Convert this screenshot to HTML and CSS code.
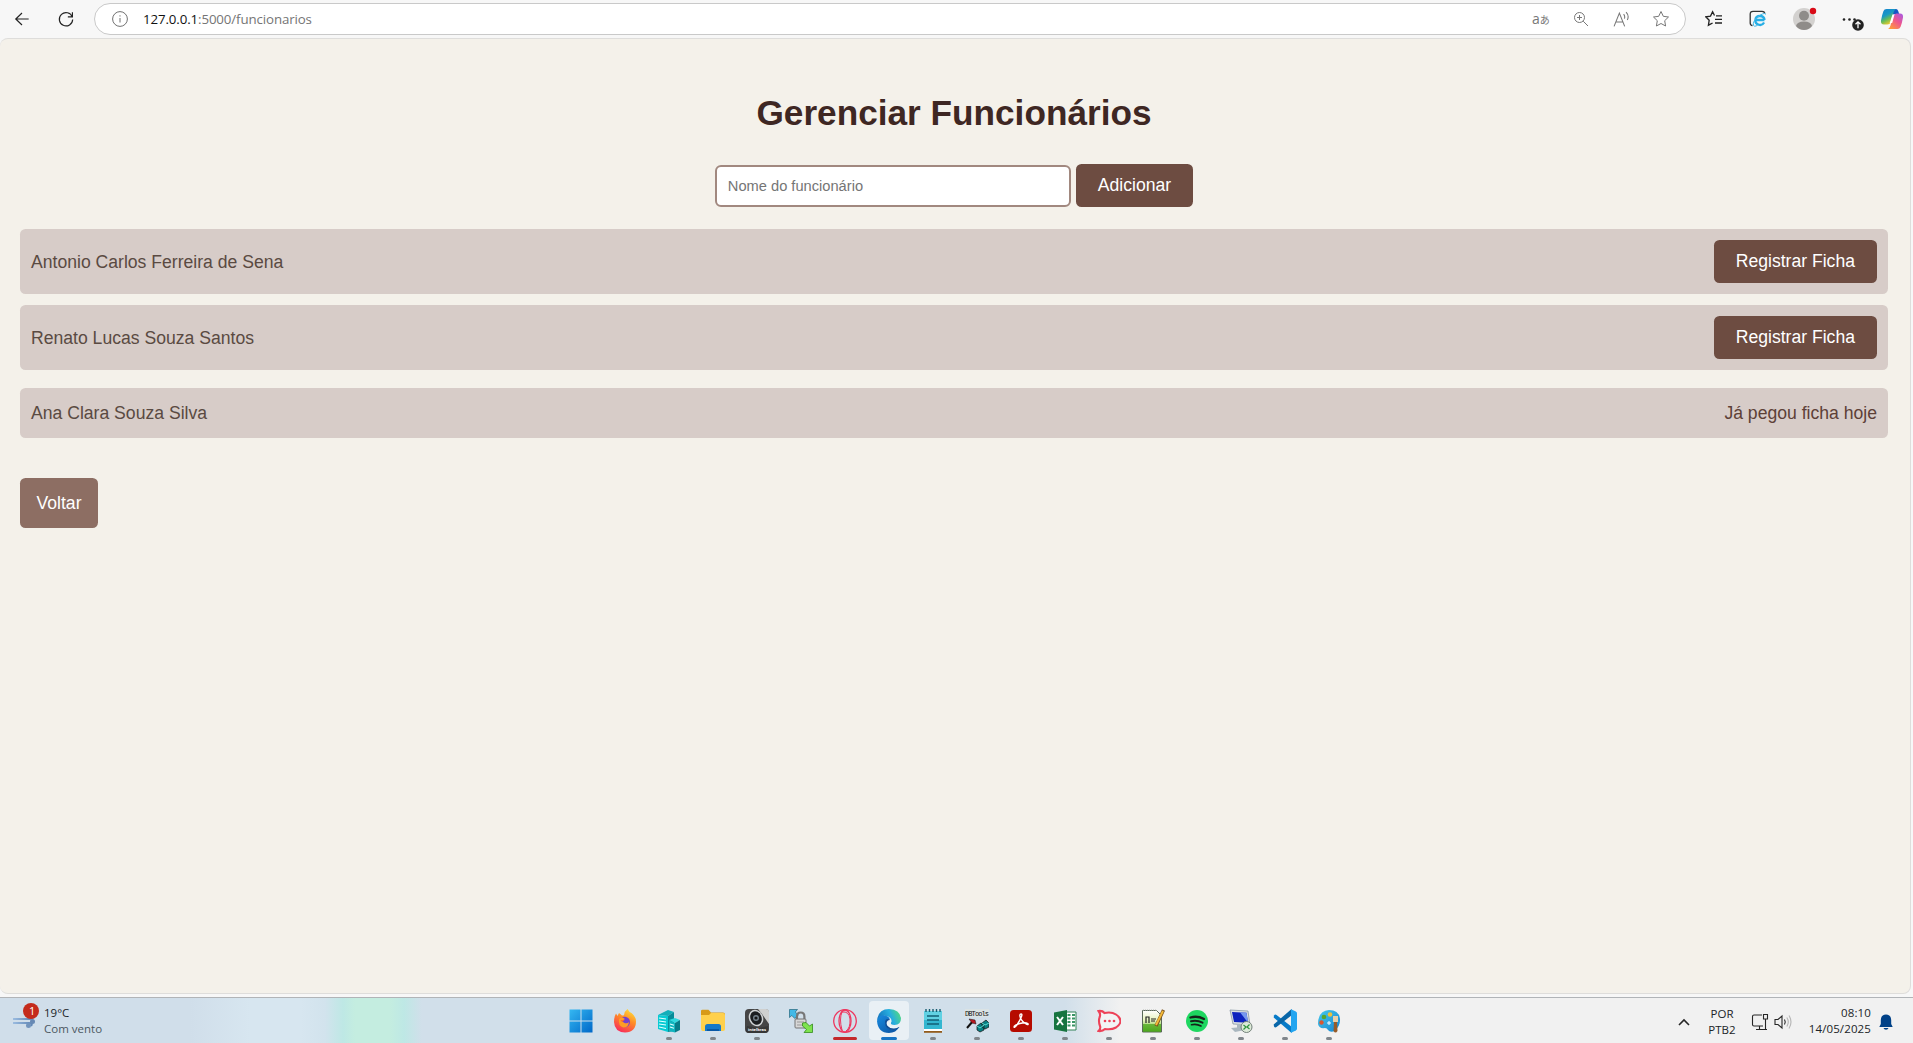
FILE: index.html
```html
<!DOCTYPE html>
<html lang="pt-BR">
<head>
<meta charset="utf-8">
<title>Gerenciar Funcionários</title>
<link rel="stylesheet" href="styles.css">
</head>
<body>
<header class="toolbar">
  <svg class="nav-icon back" viewBox="0 0 24 24"><path d="M20 12H4.5M12 4.8L4.5 12l7.500 7.200"/></svg>
  <svg class="nav-icon reload" viewBox="0 0 24 24"><path d="M19.500 9.500A8 8 0 1 0 20 12.500M19.700 4v5.500h-5.500"/></svg>
  <div class="address">
    <svg class="info" viewBox="0 0 16 16"><circle cx="8" cy="8" r="7.400"/><path d="M8 7v4.500M8 4.300v1.200"/></svg>
    <span class="url"><b>127.0.0.1</b>:5000/funcionarios</span>
    <span class="translate">a<small>あ</small></span>
    <svg class="ico zoom" viewBox="0 0 16 16"><circle cx="6.500" cy="6.500" r="5"/><path d="M10.200 10.200L15 15M6.500 4v5M4 6.500h5"/></svg>
    <svg class="ico read" viewBox="0 0 16 16"><path d="M1 14.500L6 2l5 12.500M2.700 10.300h6.700M10 3q1.600 1.800.7 4.200M12.300 1q3.200 3.300 1.200 7.500"/></svg>
    <svg class="ico star" viewBox="0 0 18 18"><path d="M9 1.500l2.300 4.800 5.200.7-3.800 3.700.9 5.300L9 13.500 4.400 16l.9-5.300L1.500 7l5.200-.7z"/></svg>
  </div>
  <svg class="tool fav" viewBox="0 0 18 18"><path d="M9.500 5.500L7.600 1.700 5.500 6.100l-4.700.7 3.400 3.400-.8 5 4.200-2.200M11 5.800h6M10 9.400h7M10 13h7" /></svg>
  <svg class="tool ie" viewBox="0 0 18 18"><path d="M3.500 15.500Q1.200 15.500 1.200 13V4Q1.200 1.300 4 1.300h9Q15.700 1.300 15.700 3.500"/><path class="e-mark" d="M15.500 10H6.500M6.300 10a4.700 4.700 0 0 1 9.300 0M6.300 10a4.700 4.700 0 0 0 8.800 2.500"/><path class="e-ring" d="M16.500 4.500Q17 2 11 5.200 3 11 4.500 15.500 5 17 8.500 15.500"/></svg>
  <svg class="tool profile" viewBox="0 0 26 26"><circle cx="12" cy="14" r="11" fill="#d3d1cf"/><circle cx="12" cy="10.800" r="5" fill="#8f8c89"/><path d="M4 21q1-4.500 8-4.500t8 4.500q-3.200 4-8 4t-8-4" fill="#8f8c89"/><circle cx="21" cy="6" r="3.200" fill="#d90b17"/></svg>
  <svg class="tool more" viewBox="0 0 24 18"><g fill="#222"><circle cx="3" cy="6.500" r="1.300"/><circle cx="8.500" cy="6.500" r="1.300"/><circle cx="13.500" cy="6.500" r="1.300"/><circle cx="17" cy="12" r="5.800"/></g><path d="M17 15.300V9M14.500 11.200L17 8.800l2.500 2.400" fill="none" stroke="#fff" stroke-width="1.300"/></svg>
  <svg class="tool copilot" viewBox="0 0 24 24">
    <defs><linearGradient id="cpA" x2=".5" y2="1"><stop stop-color="#1582cf"/><stop offset=".45" stop-color="#1999c5"/><stop offset=".7" stop-color="#68bd57"/><stop offset="1" stop-color="#f2c92c"/></linearGradient><linearGradient id="cpB" x1="1" x2=".2" y2="1"><stop stop-color="#a45be8"/><stop offset=".5" stop-color="#ef568e"/><stop offset="1" stop-color="#ff9b39"/></linearGradient></defs>
    <path fill="#1657c5" d="M13 2h3q1.600 0 2.200 2l1 3h-4q-2 0-2.700 2z"/>
    <path fill="url(#cpA)" d="M6.500 2H16q-1.800 1-2.500 3.500l-2.700 9.200Q10 17.500 7.500 17.500H4Q.5 17.500 1 13.500 2 7.800 3.400 4.200 4.200 2 6.500 2z"/>
    <path fill="url(#cpB)" d="M17.500 22H8q1.800-1 2.500-3.500l2.700-9.200Q14 6.500 16.500 6.500H20q3.500 0 3 4-1 5.700-2.400 9.300-.8 2.200-3.100 2.200z"/>
    <path fill="#fff" d="M12.500 7.500h2L12.200 16h-2.500z"/>
  </svg>
</header>

<main class="page">
  <h1>Gerenciar Funcionários</h1>
  <form class="add-form">
    <input class="name-input" type="text" placeholder="Nome do funcionário">
    <button class="button" type="button">Adicionar</button>
  </form>
  <ul class="staff">
    <li class="staff-row"><span class="name">Antonio Carlos Ferreira de Sena</span><button class="button" type="button">Registrar Ficha</button></li>
    <li class="staff-row"><span class="name">Renato Lucas Souza Santos</span><button class="button" type="button">Registrar Ficha</button></li>
  </ul>
  <ul class="staff done">
    <li class="staff-row"><span class="name">Ana Clara Souza Silva</span><span>Já pegou ficha hoje</span></li>
  </ul>
  <a class="back-link">Voltar</a>
</main>

<footer class="taskbar">
  <div class="weather">
    <svg viewBox="0 0 28 28"><defs><linearGradient id="wind"><stop stop-color="#9bbce0"/><stop offset="1" stop-color="#5c83b4"/></linearGradient></defs><path d="M1 16h17q4-1 3-4M1 20h16q4 0 2 3" fill="none" stroke="url(#wind)" stroke-width="2.200"/><circle cx="16.500" cy="22.500" r="2.500" fill="#7294bd"/><circle cx="20.500" cy="18.500" r="2.500" fill="#6789b4"/><circle cx="19" cy="8" r="8" fill="#c42b1c"/></svg>
    <span class="count">1</span>
    <div class="forecast"><span>19°C</span><span class="muted">Com vento</span></div>
  </div>

  <nav class="apps">
    <div class="app"><svg viewBox="0 0 24 24"><defs><linearGradient id="win" x2="1" y2="1"><stop stop-color="#35b8f2"/><stop offset="1" stop-color="#0068c8"/></linearGradient></defs><path fill="url(#win)" d="M.5.500h11v11H.5zM12.500.500h11v11h-11zM.5 12.500h11v11H.5zM12.500 12.500h11v11h-11z"/></svg></div>
    <div class="app"><svg viewBox="0 0 24 24"><defs><linearGradient id="ff" x1=".8" x2=".3" y2="1"><stop stop-color="#ffe43b"/><stop offset=".45" stop-color="#ff8b27"/><stop offset="1" stop-color="#f82b5b"/></linearGradient></defs><path fill="url(#ff)" d="M14.500 0q1.500 3 4 4 4.500 3.500 4.500 8.500Q23 23 12 23.500 1.500 23 1 13 1 8 3 4.500L4.500 7 6 4l3 2.500 2-.2Q11.500 2 14.500 0z"/><circle cx="11.800" cy="13" r="5.200" fill="#7441cf"/><path fill="#ff9c24" d="M6 10q3-3 6 0l-3.500 2 3 2q3 1 4.500-1-.5 5.500-5.500 5.500Q5 17.500 6 10z"/><path fill="#ff6a29" d="M7.500 11h4L9 13z"/></svg></div>
    <div class="app run"><svg viewBox="0 0 24 24"><path fill="#13aeb9" d="M1 6L11 1l6 2-6 4z"/><path fill="#07cbd4" d="M1 6l10 1v16l-10-3z"/><path fill="#078c99" d="M11 7l6-4v19l-6 1z"/><path fill="#31d9df" d="M12 11l6-2 5 2-5 3z"/><path fill="#10b5bf" d="M12 11l6 3v9.500L12 22z"/><path fill="#087c89" d="M18 14l5-3v10l-5 2.500z"/><path stroke="#e4ffff" stroke-width="1.200" d="M2 9l7 1M2 12l7 1M2 15l7 1M2 18l7 1.500M13 15l4 1.200M13 18l4 1.200"/></svg></div>
    <div class="app run"><svg viewBox="0 0 24 24"><path fill="#d89a18" d="M0 2Q0 .7 1.500.7h6L10 3.500h12q2 0 2 2V9H0z"/><path fill="#ffd04c" d="M0 6h8l2-2h12q2 0 2 2v14q0 2-2 2H2q-2 0-2-2z"/><path fill="#1678c9" d="M4 22v-4.500Q4 15 6.500 15h11Q20 15 20 17.500V22z"/><path fill="#0758a6" d="M6 20h12v2H6z"/></svg></div>
    <div class="app run"><svg viewBox="0 0 24 24"><rect width="24" height="24" rx="4" fill="#454545"/><path fill="#cfd0cf" d="M13 0h8q3 0 3 3v12L17 5z"/><ellipse cx="11" cy="9" rx="7" ry="8.500" fill="#d1d4d5" transform="rotate(-25 11 9)"/><ellipse cx="11" cy="9" rx="5.500" ry="7" fill="#1c1e20" transform="rotate(-25 11 9)"/><circle cx="11" cy="9" r="3" fill="#74818a"/><circle cx="11" cy="9" r="1.600" fill="#161616"/><path d="M2 17l12 2 9-2v4q0 3-3 3H4q-3 0-3-3z" fill="#373737"/><text x="12" y="22" font-size="4" text-anchor="middle" fill="#fff" font-weight="bold">intelbras</text></svg></div>
    <div class="app"><svg viewBox="0 0 24 24"><path fill="#42b9e7" stroke="#24657c" stroke-width=".7" d="M.5.500h8L6.300 3l3 3-3.500 3.500-3-3L.5 8.500z"/><path d="M8 11V7.500q0-4 3.700-4t3.700 4V11" fill="none" stroke="#777" stroke-width="2.200"/><rect x="6" y="10" width="11" height="9" rx="1" fill="#d7d7d7" stroke="#747474"/><path d="M8 13h7M8 16h7" stroke="#999"/><path fill="#7ee34e" stroke="#348b1d" stroke-width=".8" d="M13.500 14l3.500-.5 3.500 3.500 3-2v8.500H15l2.500-3-4-3.500z"/></svg></div>
    <div class="app run opera"><svg viewBox="0 0 24 24"><g fill="none" stroke="#ee365e"><circle cx="12" cy="12" r="11.300" stroke-width="1.300"/><ellipse cx="12" cy="12" rx="6" ry="11" stroke-width="1.300"/><path d="M9 3q7-1 8 7 .5 9-4 12M9 3q-3 7 0 18" stroke-width="1"/></g></svg></div>
    <div class="app run active"><svg viewBox="0 0 24 24"><defs><linearGradient id="edgeT" y1=".3" x2="1"><stop stop-color="#1679be"/><stop offset=".5" stop-color="#27aee0"/><stop offset="1" stop-color="#5be36b"/></linearGradient><linearGradient id="edgeB" x2="1" y2="1"><stop stop-color="#198ce0"/><stop offset="1" stop-color="#0a4e9d"/></linearGradient></defs><path fill="url(#edgeT)" d="M0 12Q1 0 12 0q11 .5 12 9.500 0 6-6.500 6.500-5 0-3-3.300Q15 8 9 7 3 6 0 12z"/><path fill="url(#edgeB)" d="M0 12Q1 5.500 8 6.500q4.500 1 5 4-4 .5-4 5 1.500 6 9 4.500 3-1.200 4.500-2.200Q19 24 12 24 1 24 0 12z"/><path fill="#124e96" d="M8 13q0 8 8.500 8 3.500-.5 6-3-8 3.700-12-1.500Q9 13.500 13 10.500 8.500 9 8 13z"/><path fill="#edf5f9" d="M12.800 10.400q-2.700 2-.5 5 3.500 3.500 8.700 2.500-7.500 3-11-2-1.500-4 2.800-5.500z"/></svg></div>
    <div class="app run"><svg viewBox="0 0 24 24"><path fill="#33b6d0" d="M3 2h18v19H3z"/><path fill="#60d1e3" d="M3 2h18v9H3z"/><path stroke="#175d71" stroke-width="1.400" d="M5 0v3M8.500 0v3M12 0v3M15.500 0v3M19 0v3"/><path stroke="#125f76" stroke-width="1.300" d="M6 7h12M6 11h12M6 15h12"/><path fill="#fff" d="M3 20h18v2H3z"/><path fill="#925c1d" d="M3 22h18v1.800H3z"/></svg></div>
    <div class="app run"><svg viewBox="0 0 24 24"><path fill="#dbe3e4" d="M0 0h24v8H0z"/><text class="dbtools" x="12" y="7" text-anchor="middle" textLength="24" fill="#111">DBTools</text><path d="M2 19l6-7" stroke="#111" stroke-width="2"/><path d="M4 10l6 1 1 4-4-1z" fill="#b91920" stroke="#111" stroke-width=".5"/><path fill="#087f83" stroke="#111" stroke-width=".7" d="M12 17l4-3 3 2v5l-4 2-3-2zM17 14l4-3 3 3v4l-4 2-3-2z"/><path d="M12 17l3 2 4-3M17 14l3 2 4-2" fill="none" stroke="#5adbd1"/></svg></div>
    <div class="app run"><svg viewBox="0 0 24 24"><rect x="1" y="1" width="22" height="22" rx="3.500" fill="#b60b00"/><path d="M12 5q-2 0-.5 4 1.500 4 6.300 6.300 2 .7 1-.8-2.500-1.600-8 0-5.500 1.700-5.800 3.500.3 1 2.500-1.500 3.500-4.800 5-9Q13.500 5 12 5z" fill="none" stroke="#fff" stroke-width="1.400"/></svg></div>
    <div class="app run"><svg viewBox="0 0 24 24"><path fill="#fff" stroke="#328257" d="M11 3h12v18H11z"/><path fill="#3a9565" d="M14.500 5h3v2h-3zm4.500 0h3v2h-3zm-4.500 3.500h3v2h-3zm4.500 0h3v2h-3zM14.500 12h3v2h-3zm4.500 0h3v2h-3zM14.500 15.500h3v2h-3zm4.500 0h3v2h-3z"/><path fill="#17743f" d="M1 3.500L14 1v22L1 20.500z"/><path stroke="#fff" stroke-width="2" d="M4 8l6 8M10 8l-6 8"/></svg></div>
    <div class="app run"><svg viewBox="0 0 24 24"><path d="M1.500 2q4-.5 6 2 7-1.500 11.500 1.500 4.500 3 4.500 6.500T19 18.500Q14.500 21 8 20q-2.500 2.500-6.500 2Q4 19.500 3 17q-2-5 0-10Q3.500 4.500 1.500 2z" fill="#f2f4f5" stroke="#ed4258" stroke-width="2.100"/><g fill="#ed4258"><circle cx="8" cy="12" r="1.300"/><circle cx="12.500" cy="12" r="1.300"/><circle cx="17" cy="12" r="1.300"/></g></svg></div>
    <div class="app run"><svg viewBox="0 0 24 24"><defs><linearGradient id="note" x2="0" y2="1"><stop stop-color="#fff"/><stop offset=".45" stop-color="#e7f5bd"/><stop offset="1" stop-color="#55ad21"/></linearGradient></defs><path fill="url(#note)" stroke="#596957" d="M1.500 1.500h14l5 5V23h-19z"/><path fill="#47a51a" d="M2 15h18v7.500H2z" opacity=".7"/><path d="M5 14V8h3v6M10 10h5M10 12h4" fill="none" stroke="#222" stroke-width="1.200"/><path stroke="#7b541e" stroke-width="3.300" d="M22.500 1L15 17"/><path stroke="#f4ba39" stroke-width="2" d="M22 2l-7 14"/><path stroke="#b4b9b5" stroke-dasharray="1" d="M2 1h13"/></svg></div>
    <div class="app run"><svg viewBox="0 0 24 24"><circle cx="12" cy="12" r="11" fill="#1ed760"/><g fill="none" stroke="#142419" stroke-linecap="round"><path stroke-width="2.300" d="M5.500 8.500q7-2 13.500 1.500"/><path stroke-width="2" d="M6 12.200q6-1.500 11.500 1.500"/><path stroke-width="1.600" d="M6.500 15.800q5-1.200 9.500 1.200"/></g></svg></div>
    <div class="app run"><svg viewBox="0 0 24 24"><path fill="#d9dfe2" stroke="#7a8c99" stroke-width=".7" d="M1 1l18 1 2 14-17-1z"/><path fill="#0d23be" d="M3 3l14.500.7 1.500 10L5 13z"/><path fill="#7598ef" d="M11 3.300l6.500.4 1.500 10z"/><path fill="#aab7bf" d="M8 15h6v4H8zM2 19l11-1 3 3-10 2z"/><circle cx="17.500" cy="18" r="5.500" fill="#ddead8" stroke="#73817a"/><path d="M14.500 16l2.500 2-2.500 2.500M20.500 15.500L18 18l2.500 2" fill="none" stroke="#2e943c" stroke-width="1.200"/></svg></div>
    <div class="app run"><svg viewBox="0 0 24 24"><path fill="#087bc8" d="M1 6.500q1-1.500 2.500-.5L19 18v5.500h-1L.7 8.500z"/><path fill="#0967a9" d="M1 17.500q1 1.500 2.500.5L19 6V.500h-1L.7 15.500z"/><path fill="#23a5f0" d="M18 .2l4.800 2.300q1.200.6 1.200 1.800v15.400q0 1.200-1.200 1.800L18 23.800z"/></svg></div>
    <div class="app run"><svg viewBox="0 0 24 24"><defs><linearGradient id="paint" x2="1" y2="1"><stop stop-color="#45c9ed"/><stop offset="1" stop-color="#1683d0"/></linearGradient></defs><path fill="url(#paint)" d="M12 1q10 0 11 9 .5 6-5 12-5 2-7-1-1-2-3-2-6 1-7-4Q1 2 12 1z"/><circle cx="7" cy="8" r="2.300" fill="#59a52d"/><circle cx="13" cy="5.500" r="2.300" fill="#edc13d"/><circle cx="4.500" cy="13.500" r="2.200" fill="#d95731"/><path stroke="#fff" d="M12 12v4M10 14h4"/><path fill="#ead0a8" d="M16 7h5v6h-5z"/><path fill="#975b28" d="M17 13h3l.5 9q-2 3-4 0z"/></svg></div>
  </nav>

  <div class="tray">
    <svg class="chevron" viewBox="0 0 12 8"><path d="M1 7l5-5 5 5"/></svg>
    <div class="lang"><span>POR</span><span>PTB2</span></div>
    <svg class="network" viewBox="0 0 18 18"><path d="M11 2H3Q1.500 2 1.500 3.500v8Q1.500 13 3 13h9M5 16.500h11M8.500 13v3M12.500 1.500h4v4.500h-4zM14.500 6v10"/></svg>
    <svg class="sound" viewBox="0 0 18 16"><path d="M1 5.500h3L8 2v12l-4-3.500H1z"/><path d="M10.500 5.500q1.500 2.500 0 5"/><path class="faint" d="M12.800 3.500q3 4.500 0 9M15 1.500q4 6.500 0 13"/></svg>
    <div class="clock"><span>08:10</span><span>14/05/2025</span></div>
    <svg class="bell" viewBox="0 0 14 16"><path d="M7 .5q5 0 5.200 5.500v4l1.500 3H.3l1.500-3V6Q2 .5 7 .5zM4.500 14h5Q9 15.700 7 15.700T4.500 14z"/></svg>
  </div>
</footer>
</body>
</html>
```
FILE: styles.css
```css
* { box-sizing: border-box; }
body {
  margin: 0;
  width: 1913px;
  height: 1043px;
  overflow: hidden;
  display: grid;
  grid-template-rows: 38px 956px 49px;
  background: #f7f7f7;
  font-family: "Liberation Sans", Arial, sans-serif;
  font-size: 17.6px;
}
svg { display: block; flex: none; }

.toolbar { display: flex; align-items: center; }
.nav-icon { width: 20px; height: 20px; fill: none; stroke: #222; stroke-width: 1.4; }
.back { margin-left: 12px; }
.reload { margin-left: 24px; }
.address {
  display: flex;
  align-items: center;
  width: 1592px;
  height: 32px;
  margin-left: 18px;
  padding-left: 17px;
  border: 1px solid #c9c9c9;
  border-radius: 16px;
  background: #fff;
}
.info { width: 16px; height: 16px; fill: none; stroke: #717171; stroke-width: 1; }
.url {
  width: 1372px;
  margin-left: 15px;
  color: #757575;
  font: 13.3px/20px "Open Sans", "Noto Sans", sans-serif;
  letter-spacing: -.12px;
}
.url b { color: #111; font-weight: 400; }
.translate { width: 24px; margin-left: 17px; color: #777; font: 14px/20px "Open Sans", "Noto Sans CJK JP", sans-serif; white-space: nowrap; }
.translate small { font-size: 10px; }
.ico { fill: none; stroke: #777; stroke-width: 1; }
.zoom { width: 16px; height: 16px; margin-left: 17px; }
.read { width: 17px; height: 17px; margin-left: 24px; }
.star { width: 18px; height: 18px; margin-left: 22px; }
.tool { width: 18px; height: 18px; }
.fav { margin-left: 19px; fill: none; stroke: #222; stroke-width: 1.3; }
.ie { margin-left: 26px; fill: none; stroke: #333; stroke-width: 1.3; }
.ie .e-mark { stroke: #27aee5; stroke-width: 2.3; }
.ie .e-ring { stroke: #42b9e9; stroke-width: 1; }
.profile { width: 26px; height: 26px; margin: 0 0 3px 25px; }
.more { width: 24px; height: 18px; margin: 5px 0 0 23px; }
.copilot { width: 24px; height: 24px; margin-left: 15px; }

.page {
  width: 1911px;
  height: 956px;
  padding: 57px 22px 0 20px;
  background: #f4f1ea;
  border: solid #dedddb;
  border-width: 1px 1px 1px 0;
  border-radius: 8px;
}
h1 {
  margin: 0;
  color: #3e2723;
  font-size: 35.2px;
  line-height: 34px;
  text-align: center;
}
.add-form { display: flex; justify-content: center; align-items: flex-end; gap: 5px; margin-top: 34px; }
.name-input {
  width: 356px;
  height: 42px;
  padding: 0 11px;
  border: 2px solid #a1887f;
  border-radius: 6px;
  background: #fff;
  font: 14.667px "Liberation Sans", Arial, sans-serif;
}
.name-input::placeholder { color: #757575; }
.button {
  height: 43px;
  padding: 0 22px;
  border: 0;
  border-radius: 5.5px;
  background: #6d4c41;
  color: #fff;
  font: 17.6px "Liberation Sans", Arial, sans-serif;
}
.staff { display: grid; gap: 11px; margin: 22px 0 0; padding: 0; list-style: none; }
.staff-row {
  display: flex;
  align-items: center;
  justify-content: space-between;
  height: 65px;
  padding: 0 11px;
  border-radius: 5.5px;
  background: #d7ccc8;
  color: #5d4037;
}
.name { padding-top: 1px; color: #5a4a42; }
.done { margin-top: 18px; }
.done .staff-row { height: 50px; }
.done .name { padding-top: 0; }
.back-link {
  display: flex;
  align-items: center;
  justify-content: center;
  width: 78px;
  height: 50px;
  margin-top: 40px;
  border-radius: 5.5px;
  background: #8d6e63;
  color: #fff;
}

.taskbar {
  display: flex;
  align-items: flex-start;
  margin-top: 3px;
  border-top: 1px solid #b1b4b7;
  background: linear-gradient(90deg, #d0deea 0, #d0deea 190px, #d7e6f0 250px, #d7e6f0 300px, #d2e3ed 325px, #bee8e5 343px, #c4ede0 355px, #c4ede0 390px, #bee8e5 404px, #d1dfea 422px, #d1dfea 1065px, #f1f1f1 1120px);
  font: 11.5px/16px "Open Sans", "Noto Sans", sans-serif;
  color: #202427;
}
.weather { display: flex; width: 559px; padding-left: 12px; position: relative; }
.weather svg { width: 28px; height: 28px; margin-top: 5px; }
.count { position: absolute; left: 29px; top: 5px; color: #fff; font-size: 11px; }
.forecast { display: grid; margin: 7px 0 0 4px; }
.muted { color: #4c5861; }
.apps { display: flex; }
.app { width: 40px; height: 44px; margin: 3px 2px 0; padding: 8px 8px 0; border-radius: 4px; }
.app svg { width: 24px; height: 24px; }
.run::after { content: ""; display: block; width: 6px; height: 3px; margin: 4px auto 0; border-radius: 2px; background: #80868b; }
.active { height: 39px; background: #e9f0f5; }
.active::after { width: 16px; background: #1673c4; }
.opera::after { width: 24px; background: #c3282b; }
.dbtools { font: 7px "Liberation Mono", monospace; }
.tray { display: flex; margin-left: 327px; align-items: center; height: 47px; white-space: nowrap; }
.tray path { fill: none; stroke: #262626; stroke-width: 1.1; }
.tray .chevron { width: 12px; height: 8px; }
.tray .chevron path { stroke-width: 1.6; }
.lang, .clock { display: grid; }
.lang { width: 46px; margin-left: 9px; text-align: center; }
.network { width: 18px; height: 18px; margin-left: 6px; }
.sound { width: 18px; height: 16px; margin-left: 5px; }
.tray .faint { stroke: #b5b5b5; }
.clock { width: 72px; margin: -2px 0 0 7px; text-align: right; letter-spacing: .12px; }
.bell { width: 14px; height: 16px; margin-left: 8px; }
.tray .bell path { fill: #004187; stroke: none; }
```
